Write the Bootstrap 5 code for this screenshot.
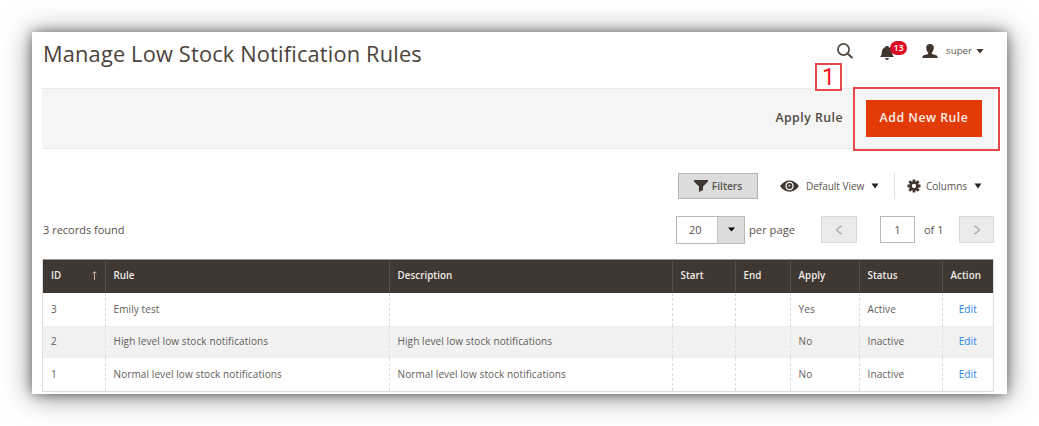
<!DOCTYPE html>
<html lang="en">
<head>
<meta charset="utf-8">
<title>Manage Low Stock Notification Rules</title>
<link href="https://cdn.jsdelivr.net/npm/bootstrap@5.3.0/dist/css/bootstrap.min.css" rel="stylesheet">
<style>
body{font-family:"Open Sans","Noto Sans",sans-serif;font-size:11px;line-height:16px;color:#5a524c;background:#fff;min-height:426px;padding:32px 0 0 32px}
.panel{width:975px;height:362px;padding:0 13px 0 10px;background:#fff;box-shadow:0 0 10px rgba(0,0,0,.4),0 2px 26px rgba(0,0,0,.5)}
.page-head{height:56px;padding:7px 10px 0 1px}
h1{font-size:21.8px;line-height:30px;font-weight:400;color:#4b423b;letter-spacing:.17px}
.tools{height:37px;margin-top:-7px;color:#5f5751;font-size:9.7px;padding-top:1px}
.bell{width:28px;height:20px;margin:0 14px 0 26px}
.count{left:10px;top:0;width:17px;height:14px;border-radius:7px;background:#dc0a26;color:#fff;font-size:9px;line-height:14px;font-weight:600;text-align:center}
.actions{height:61px;background:#f5f5f5;border:solid #e9e9e9;border-width:1px 0;padding-right:12px}
.btn-apply{padding:0;border:0;font-size:12.3px;font-weight:600;color:#514943;margin-right:24px;letter-spacing:.48px;margin-right:23px}
.btn-new{width:116px;height:37px;padding:0;border:0;border-radius:0;background:#e23b08!important;color:#fbeee4!important;font-size:12.3px;font-weight:600;letter-spacing:.5px}
.frame{right:-6px;top:-2px;width:147px;height:64px;border:2px solid #e8484c;pointer-events:none}
.step{right:152px;top:-26px;width:27px;height:28px;border:2px solid #e8484c;background:#fff;box-shadow:0 0 0 1.5px #fff;color:#fb1020;font:23px/25px Roboto,sans-serif;text-align:center}
.views{height:26px;margin-top:24px;font-size:10px}
.btn-filter{width:80px;height:26px;padding:0;border:1px solid #b5b5b5;border-radius:0;background:#dcdcdc;font-size:10.2px;line-height:16px;font-weight:600;color:#5a524c}
.view-name{width:58px;letter-spacing:-.02px;white-space:nowrap}
.columns-name{width:41px;white-space:nowrap}
.rule-line{width:1px;height:26px;background:#dfdfdf}
.eye{margin-left:22px;margin-right:7px}
.view-caret{margin-left:7px;margin-right:15px}
.gear{margin-left:12px;margin-right:5px}
.col-caret{margin-left:7px;margin-right:12px}
.pager{height:27px;margin-top:17px;padding-left:1px}
.limit{width:69px;height:28px;border:1px solid #b8b8b8;flex:none}
.limit-value{width:41px;padding-right:4px}
.limit-arrow{width:27px;background:#dcdcdc;border-left:1px solid #c4c4c4}
.per-page{margin-left:4px;width:72px;font-size:11.2px}
.page-of{margin-left:9px;width:35px}
.btn-page{width:36px;height:27px;padding:0;border:1px solid #dadada;border-radius:0;background:#ebebeb}
.btn-next{width:35px}
.page-box{width:35px;height:27px;margin-left:23px;border:1px solid #b8b8b8}
.rules{width:952px;table-layout:fixed;margin:16px 0 0;border:1px solid #dedede;border-top:0;border-collapse:separate;border-spacing:0;font-size:10px;line-height:14px;letter-spacing:.1px}
.rules th{height:34px;padding:0 8px 2px!important;background:#3e3732!important;color:#f0ece7!important;font-weight:600;font-size:9.8px;letter-spacing:.05px;border:0 solid #57504b;border-left-width:1px;vertical-align:middle;border-top:1px solid #9d9894}
.rules td{height:32.6px;padding:0 8px 1px!important;border:0 dashed #dedede;border-left-width:1px;vertical-align:middle;color:#625d5a}
.rules th:first-child,.rules td:first-child{border-left-width:0}
.rules th:not(:first-child),.rules td:not(:first-child){padding-left:7.5px!important}
.rules tr:nth-child(even) td{background:#f1f1f1}
.rules a{color:#2a82de;text-decoration:none}
</style>
</head>
<body>
<main class="panel">
  <header class="page-head d-flex justify-content-between">
    <h1 class="m-0">Manage Low Stock Notification Rules</h1>
    <div class="tools d-flex align-items-center">
      <svg width="18" height="18" viewBox="0 0 18 18" fill="none" stroke="#514943"><circle cx="7.500" cy="7.500" r="5.600" stroke-width="1.700"/><path d="M11.700 11.700L16.500 16" stroke-width="2.200"/></svg>
      <div class="bell position-relative">
        <svg width="14" height="16" viewBox="0 0 14 16" class="position-absolute bottom-0 start-0" fill="#41362f"><path d="M5.500 1h3v1.300c2.300.5 3.600 2.200 3.700 5 .1 2.200.6 3.400 1.700 4.700H.1c1.100-1.300 1.600-2.500 1.700-4.700.1-2.800 1.400-4.500 3.700-5zM5 13h4c-.3 1.300-1 2-2 2s-1.700-.7-2-2z"/></svg>
        <span class="count position-absolute">13</span>
      </div>
      <svg width="16" height="15" viewBox="0 0 16 15" fill="#41362f"><path d="M8 0c2.500 0 3.800 1.600 3.800 4 0 1.800-.8 3.500-1.900 4.500v1.400l4.300 1.300c1 .4 1.500 1.300 1.500 2.800H.3c0-1.500.5-2.400 1.500-2.800l4.300-1.300V8.500C5 7.500 4.200 5.800 4.200 4 4.200 1.600 5.500 0 8 0z"/></svg>
      <span class="ms-2">super</span>
      <svg class="ms-1" width="8" height="5" viewBox="0 0 8 5" fill="#41362f"><path d="M.5 0h7L4 4.500z"/></svg>
    </div>
  </header>

  <section class="actions position-relative d-flex justify-content-end align-items-center">
    <button class="btn btn-apply">Apply Rule</button>
    <button class="btn btn-new">Add New Rule</button>
    <span class="frame position-absolute"></span>
    <span class="step position-absolute">1</span>
  </section>

  <section class="views d-flex align-items-center justify-content-end">
    <button class="btn btn-filter d-flex align-items-center justify-content-center"><svg width="14" height="12" viewBox="0 0 14 12" class="me-1" fill="#41362f"><path d="M0 0h14v1.500L9 6.500V10l-4 2V6.500L0 1.500z"/></svg>Filters</button>
    <svg class="eye" width="19" height="12" viewBox="0 0 19 12"><path d="M0 6C5-1.500 14-1.500 19 6 14 13.500 5 13.500 0 6z" fill="#41362f"/><circle cx="9.500" cy="6" r="4.200" fill="#fff"/><circle cx="9.500" cy="6" r="2.900" fill="#41362f"/><circle cx="9.300" cy="5.700" r="1" fill="#ddd"/></svg>
    <span class="view-name">Default View</span>
    <svg class="view-caret" width="8" height="6" viewBox="0 0 8 6" fill="#26211e"><path d="M.5.500h7L4 5.500z"/></svg>
    <span class="rule-line"></span>
    <svg class="gear" width="14" height="14" viewBox="-7.500 -7.500 15 15"><g stroke="#41362f" stroke-width="3"><path d="M0-7V7M-7 0H7M-5-5L5 5M-5 5L5-5"/></g><circle r="5" fill="#41362f"/><circle r="2.300" fill="#fff"/></svg>
    <span class="columns-name">Columns</span>
    <svg class="col-caret" width="8" height="6" viewBox="0 0 8 6" fill="#26211e"><path d="M.5.500h7L4 5.500z"/></svg>
  </section>

  <section class="pager d-flex align-items-center justify-content-between">
    <span>3 records found</span>
    <div class="d-flex align-items-center">
      <div class="limit d-flex"><span class="limit-value d-flex align-items-center justify-content-center">20</span><span class="limit-arrow d-flex align-items-center justify-content-center"><svg width="7" height="5" viewBox="0 0 7 5"><path d="M0 .5h7L3.500 4.500z"/></svg></span></div>
      <span class="per-page">per page</span>
      <button class="btn btn-page d-flex align-items-center justify-content-center"><svg width="8" height="10" viewBox="0 0 8 10" fill="none" stroke="#aaa" stroke-width="1.300"><path d="M6.500.7L1.500 5l5 4.300"/></svg></button>
      <span class="page-box d-flex align-items-center justify-content-center">1</span>
      <span class="page-of">of 1</span>
      <button class="btn btn-page btn-next d-flex align-items-center justify-content-center"><svg width="8" height="10" viewBox="0 0 8 10" fill="none" stroke="#aaa" stroke-width="1.300"><path d="M1.500.7l5 4.300-5 4.300"/></svg></button>
    </div>
  </section>

  <table class="table rules">
    <colgroup><col style="width:62px"><col style="width:284px"><col style="width:283px"><col style="width:63px"><col style="width:55px"><col style="width:69px"><col style="width:83px"><col style="width:51px"></colgroup>
    <thead><tr><th><span class="d-flex justify-content-between align-items-center">ID<svg width="5" height="9" viewBox="0 0 5 9" fill="none" stroke="#cfaaa0"><path d="M2.500 9V1M.5 2.500l2-2 2 2"/></svg></span></th><th>Rule</th><th>Description</th><th>Start</th><th>End</th><th>Apply</th><th>Status</th><th class="text-nowrap">Action</th></tr></thead>
    <tbody>
      <tr><td>3</td><td>Emily test</td><td></td><td></td><td></td><td>Yes</td><td>Active</td><td class="text-center"><a href="#">Edit</a></td></tr>
      <tr><td>2</td><td>High level low stock notifications</td><td>High level low stock notifications</td><td></td><td></td><td>No</td><td>Inactive</td><td class="text-center"><a href="#">Edit</a></td></tr>
      <tr><td>1</td><td>Normal level low stock notifications</td><td>Normal level low stock notifications</td><td></td><td></td><td>No</td><td>Inactive</td><td class="text-center"><a href="#">Edit</a></td></tr>
    </tbody>
  </table>
</main>
<script src="https://cdn.jsdelivr.net/npm/bootstrap@5.3.0/dist/js/bootstrap.bundle.min.js"></script>
</body>
</html>
